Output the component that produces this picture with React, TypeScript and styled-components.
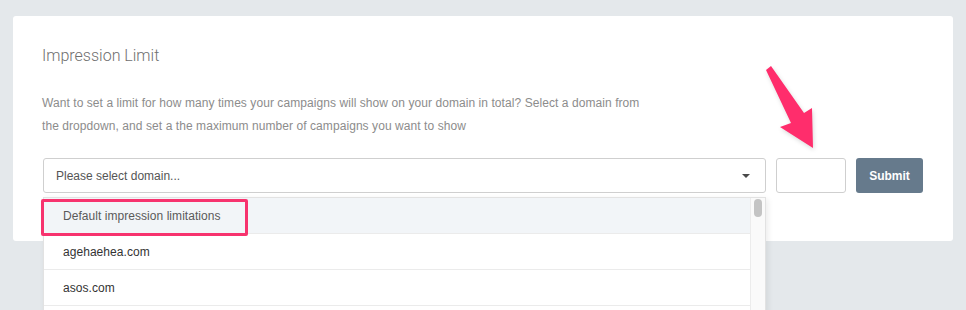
import React, { FC } from 'react';
import styled, { createGlobalStyle } from 'styled-components';

const GlobalStyle = createGlobalStyle`
  html, body {
    margin: 0;
    padding: 0;
    background: #e4e8eb;
    font-family: "Liberation Sans", Arial, sans-serif;
  }
`;

const Page = styled.div`
  position: relative;
  width: 966px;
  height: 310px;
  overflow: hidden;
  padding: 16px 13px 0;
  box-sizing: border-box;
`;

const Card = styled.section`
  background: #fff;
  border-radius: 3px;
  height: 225px;
  padding: 30px 30px 0;
  box-sizing: border-box;
`;

const Title = styled.h2`
  margin: 0 0 26px -1px;
  font-family: Roboto, "Liberation Sans", sans-serif;
  font-weight: 300;
  font-size: 16px;
  line-height: 20px;
  color: #6f6f6f;
`;

const Description = styled.p`
  margin: 0 0 20px -1px;
  max-width: 608px;
  font-size: 12px;
  line-height: 23px;
  letter-spacing: 0.07px;
  color: #8c8c8c;
`;

const FormRow = styled.div`
  position: relative;
  display: flex;
  gap: 10px;
  height: 35px;
`;

const SelectBox = styled.div`
  flex: 1;
  display: flex;
  align-items: center;
  justify-content: space-between;
  padding: 0 15px 0 12px;
  border: 1px solid #cfcfcf;
  border-radius: 3px;
  font-size: 12px;
  color: #555;
`;

const Caret = styled.span`
  width: 0;
  height: 0;
  border-left: 4px solid transparent;
  border-right: 4px solid transparent;
  border-top: 4px solid #4a4a4a;
`;

const NumberInput = styled.div`
  width: 70px;
  border: 1px solid #cfcfcf;
  border-radius: 3px;
  box-sizing: border-box;
`;

const SubmitButton = styled.button`
  width: 67px;
  border: none;
  border-radius: 3px;
  background: #667a8c;
  color: #fff;
  font-family: "Liberation Sans", Arial, sans-serif;
  font-weight: 700;
  font-size: 12px;
`;

const Dropdown = styled.ul`
  position: absolute;
  top: 39px;
  left: 0;
  width: 723px;
  height: 130px;
  margin: 0;
  padding: 0 15px 0 0;
  list-style: none;
  background: #fff;
  border: 1px solid #e2e2e2;
  box-sizing: border-box;
  box-shadow: 2px 2px 6px rgba(0, 0, 0, 0.08);
  z-index: 2;
`;

const Option = styled.li<{ $active?: boolean }>`
  height: 36px;
  display: flex;
  align-items: center;
  padding-left: 19px;
  font-size: 12px;
  letter-spacing: 0.05px;
  color: ${({ $active }) => ($active ? '#5a5a5a' : '#333')};
  background: ${({ $active }) => ($active ? '#f2f5f8' : '#fff')};
  border-bottom: 1px solid #ebebeb;
  box-sizing: border-box;
`;

const ScrollTrack = styled.div`
  position: absolute;
  top: 0;
  right: 0;
  bottom: 0;
  width: 14px;
  border-left: 1px solid #ececec;
  background: #fafafa;
`;

const ScrollThumb = styled.div`
  margin: 1px 0 0 3px;
  width: 8px;
  height: 18px;
  border-radius: 4px;
  background: #c4c4c4;
`;

const Highlight = styled.div`
  position: absolute;
  top: 199px;
  left: 41px;
  width: 207px;
  height: 37px;
  border: 3px solid #f7336e;
  border-radius: 2px;
  box-sizing: border-box;
  z-index: 3;
`;

const ArrowMark = styled.svg`
  position: absolute;
  top: 60px;
  left: 755px;
  z-index: 3;
`;

const domains = ['Default impression limitations', 'agehaehea.com', 'asos.com'];

export const ImpressionLimit: FC = () => (
  <Card>
    <Title>Impression Limit</Title>
    <Description>
      Want to set a limit for how many times your campaigns will show on your domain in total? Select a domain from
      the dropdown, and set a the maximum number of campaigns you want to show
    </Description>
    <FormRow>
      <SelectBox>
        Please select domain...
        <Caret />
      </SelectBox>
      <NumberInput />
      <SubmitButton>Submit</SubmitButton>
      <Dropdown>
        {domains.map((d, i) => (
          <Option key={d} $active={i === 0}>
            {d}
          </Option>
        ))}
        <ScrollTrack>
          <ScrollThumb />
        </ScrollTrack>
      </Dropdown>
    </FormRow>
  </Card>
);

const App: FC = () => (
  <Page>
    <GlobalStyle />
    <ImpressionLimit />
    <Highlight />
    <ArrowMark width="70" height="95" viewBox="755 60 70 95">
      <polygon
        points="766,70 771,66 804,113 812,108 813,148 780,127 791,123"
        fill="#ff2d6c"
        style={{ filter: 'drop-shadow(1px 2px 2px rgba(0,0,0,0.15))' }}
      />
    </ArrowMark>
  </Page>
);

export default App;
